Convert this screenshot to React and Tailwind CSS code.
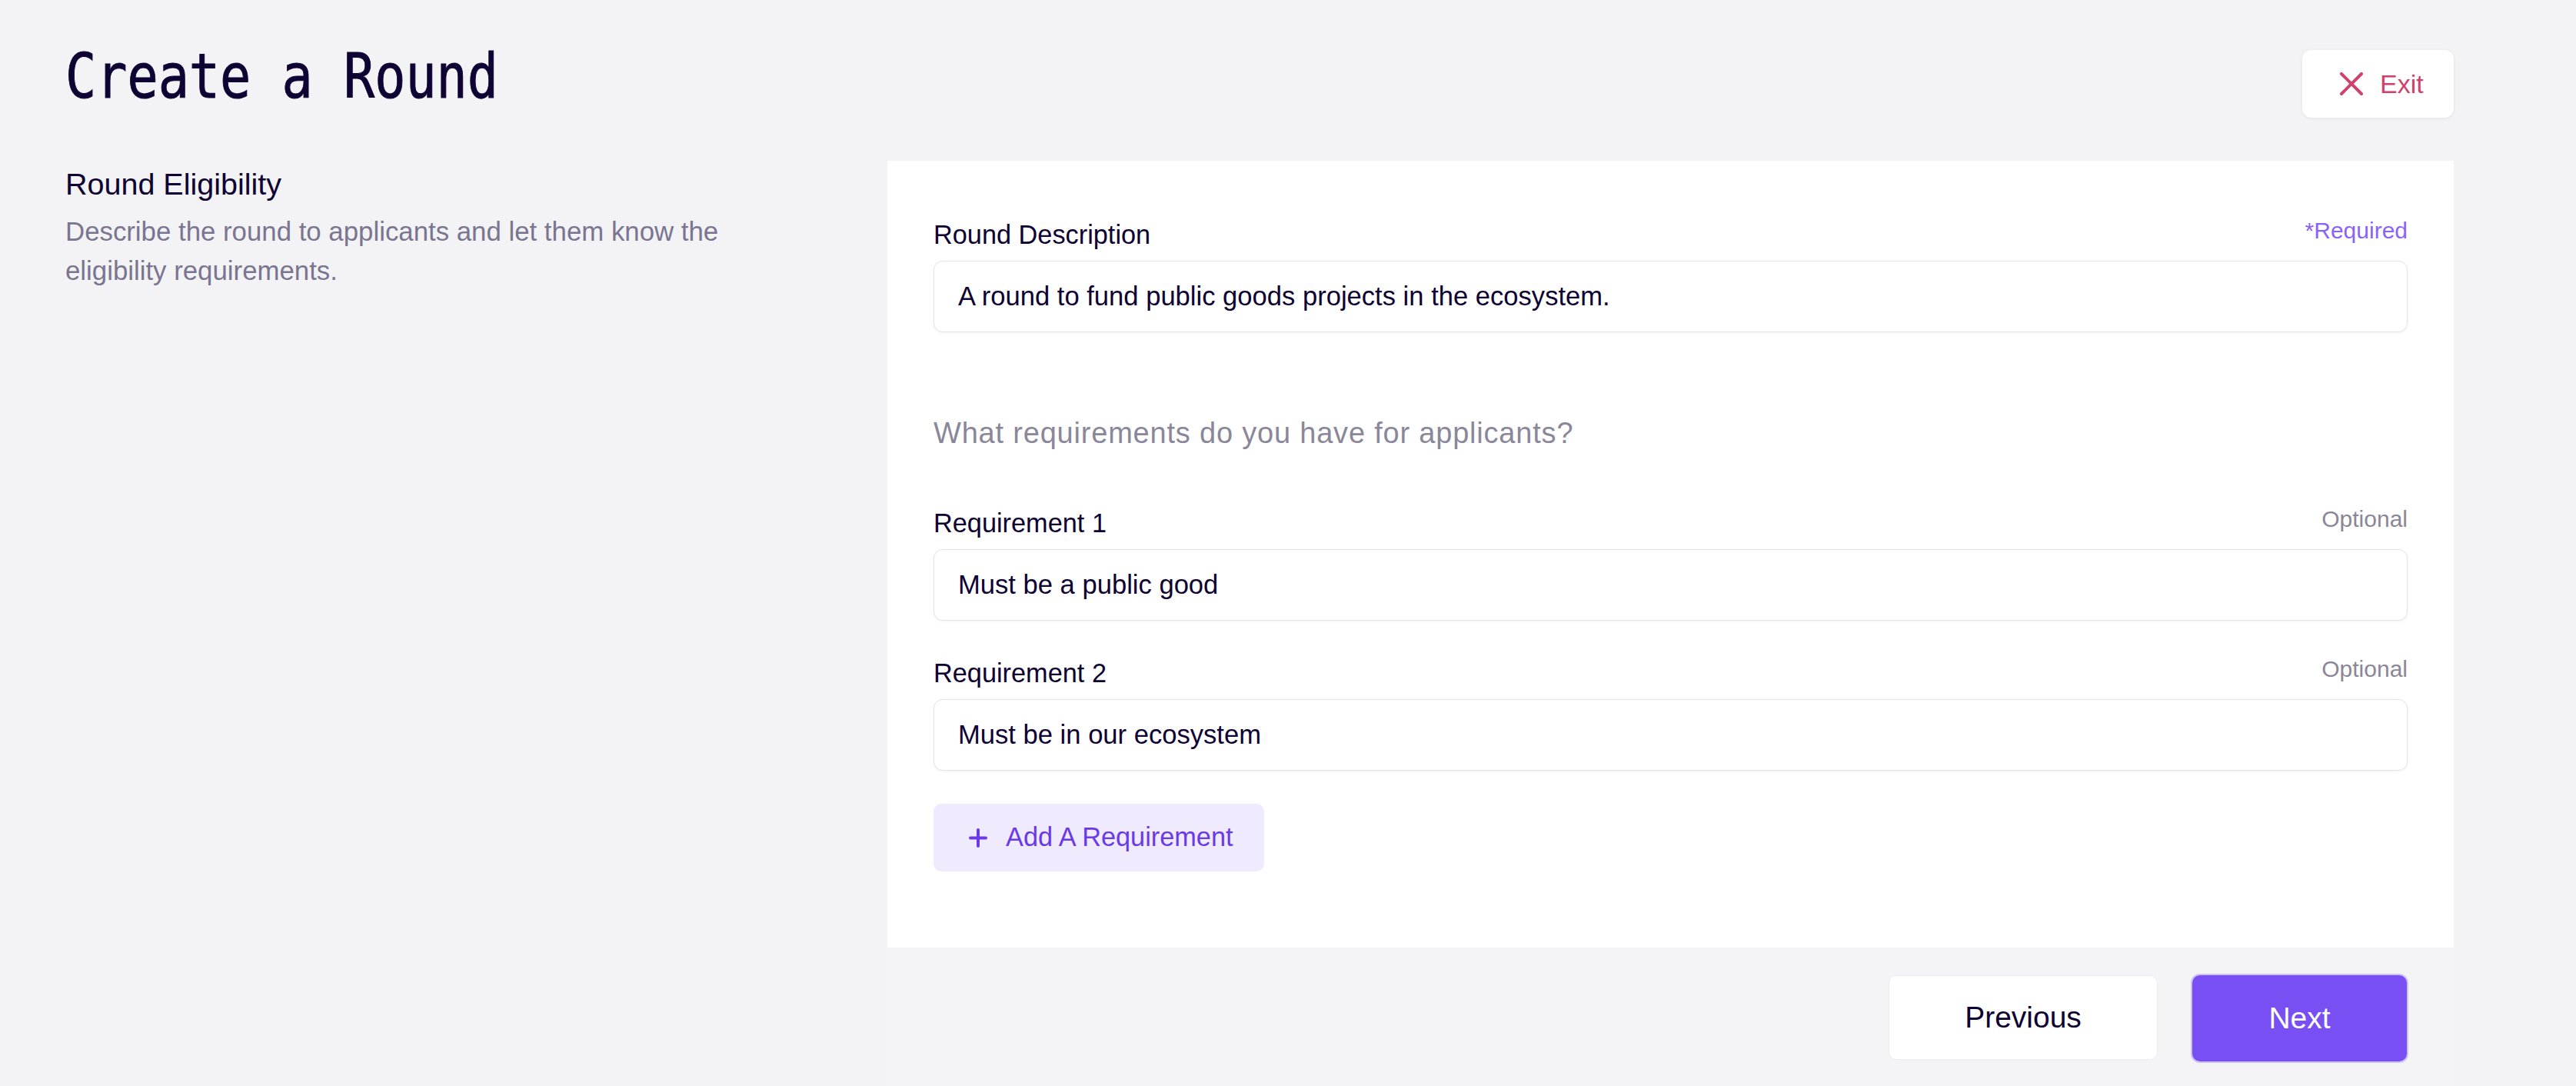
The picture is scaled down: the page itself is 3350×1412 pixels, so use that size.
import React from 'react';

function XIcon() {
  return (
    <svg width="32" height="30" viewBox="0 0 32 30" fill="none">
      <path d="M3 2 L29 28 M29 2 L3 28" stroke="#d0416b" strokeWidth="4" strokeLinecap="round" />
    </svg>
  );
}

function PlusIcon() {
  return (
    <svg width="24" height="25" viewBox="0 0 24 25" fill="none">
      <path d="M12 2 V23 M2 12.5 H22" stroke="#6a3ae8" strokeWidth="4" strokeLinecap="round" />
    </svg>
  );
}

function Field({ label, hint, hintClass, value, className = '' }) {
  return (
    <div className={className}>
      <div className="flex items-start justify-between">
        <label className="text-[34.3px] leading-[51px] text-[#0e0333]">{label}</label>
        <span className={`text-[30px] leading-[40px] ${hintClass}`}>{hint}</span>
      </div>
      <div className="mt-2 rounded-[12px] border border-[#e4e3ea] bg-white px-[31px] py-[20px] shadow-[0_1px_3px_rgba(14,3,51,0.06)]">
        <div className="text-[34.6px] leading-[51px] text-[#0e0333]">{value}</div>
      </div>
    </div>
  );
}

export default function App() {
  const requirements = ['Must be a public good', 'Must be in our ecosystem'];

  return (
    <div className="min-h-screen bg-[#f3f3f5] pl-[85px] pr-[159px] font-['Liberation_Sans',Arial,sans-serif]">
      <div className="flex items-start justify-between pt-[60px]">
        <h1 className="origin-left scale-x-[0.835] font-['DejaVu_Sans_Mono',monospace] text-[80px] leading-[80px] text-[#0e0333] [-webkit-text-stroke:1px_#0e0333]">
          Create a Round
        </h1>
        <button className="mt-[5px] flex h-[88px] w-[197px] items-center rounded-[12px] bg-white pl-[48px] shadow-[0_1px_4px_rgba(14,3,51,0.08)]">
          <XIcon />
          <span className="ml-[21px] text-[34px] text-[#d0416b]">Exit</span>
        </button>
      </div>

      <div className="mt-[56px] flex">
        <div className="w-[1069px] shrink-0 pt-[3px]">
          <h2 className="text-[39.5px] leading-[54px] text-[#0e0333]">Round Eligibility</h2>
          <p className="mt-[9px] w-[930px] text-[34.8px] leading-[51px] text-[#7a7590]">
            Describe the round to applicants and let them know the eligibility requirements.
          </p>
        </div>

        <div className="flex-1">
          <div className="bg-white px-[60px] pt-[71px] pb-[99px]">
            <Field
              label="Round Description"
              hint="*Required"
              hintClass="text-[#8a63f6]"
              value="A round to fund public goods projects in the ecosystem."
            />

            <p className="mt-[103px] text-[38px] leading-[57px] tracking-[0.8px] text-[#8b879a]">
              What requirements do you have for applicants?
            </p>

            {requirements.map((r, i) => (
              <Field
                key={r}
                className={i === 0 ? 'mt-[63px]' : 'mt-[43px]'}
                label={`Requirement ${i + 1}`}
                hint="Optional"
                hintClass="text-[#8b8797]"
                value={r}
              />
            ))}

            <button className="mt-[43px] flex h-[88px] items-center rounded-[10px] bg-[#efeafe] pl-[46px] pr-[40px]">
              <PlusIcon />
              <span className="ml-[24px] text-[34.3px] text-[#6a3ae8]">Add A Requirement</span>
            </button>
          </div>

          <div className="flex justify-end gap-[45px] bg-[#f4f4f6] pt-[36px] pb-[36px] pr-[61px]">
            <button className="h-[110px] w-[350px] rounded-[10px] border border-[#ececf0] bg-white text-[39px] text-[#0e0333]">
              Previous
            </button>
            <button className="h-[112px] w-[279px] rounded-[10px] bg-[#774ff2] text-[39px] text-white shadow-[0_0_0_2px_rgba(160,130,250,0.45)]">
              Next
            </button>
          </div>
        </div>
      </div>
    </div>
  );
}
